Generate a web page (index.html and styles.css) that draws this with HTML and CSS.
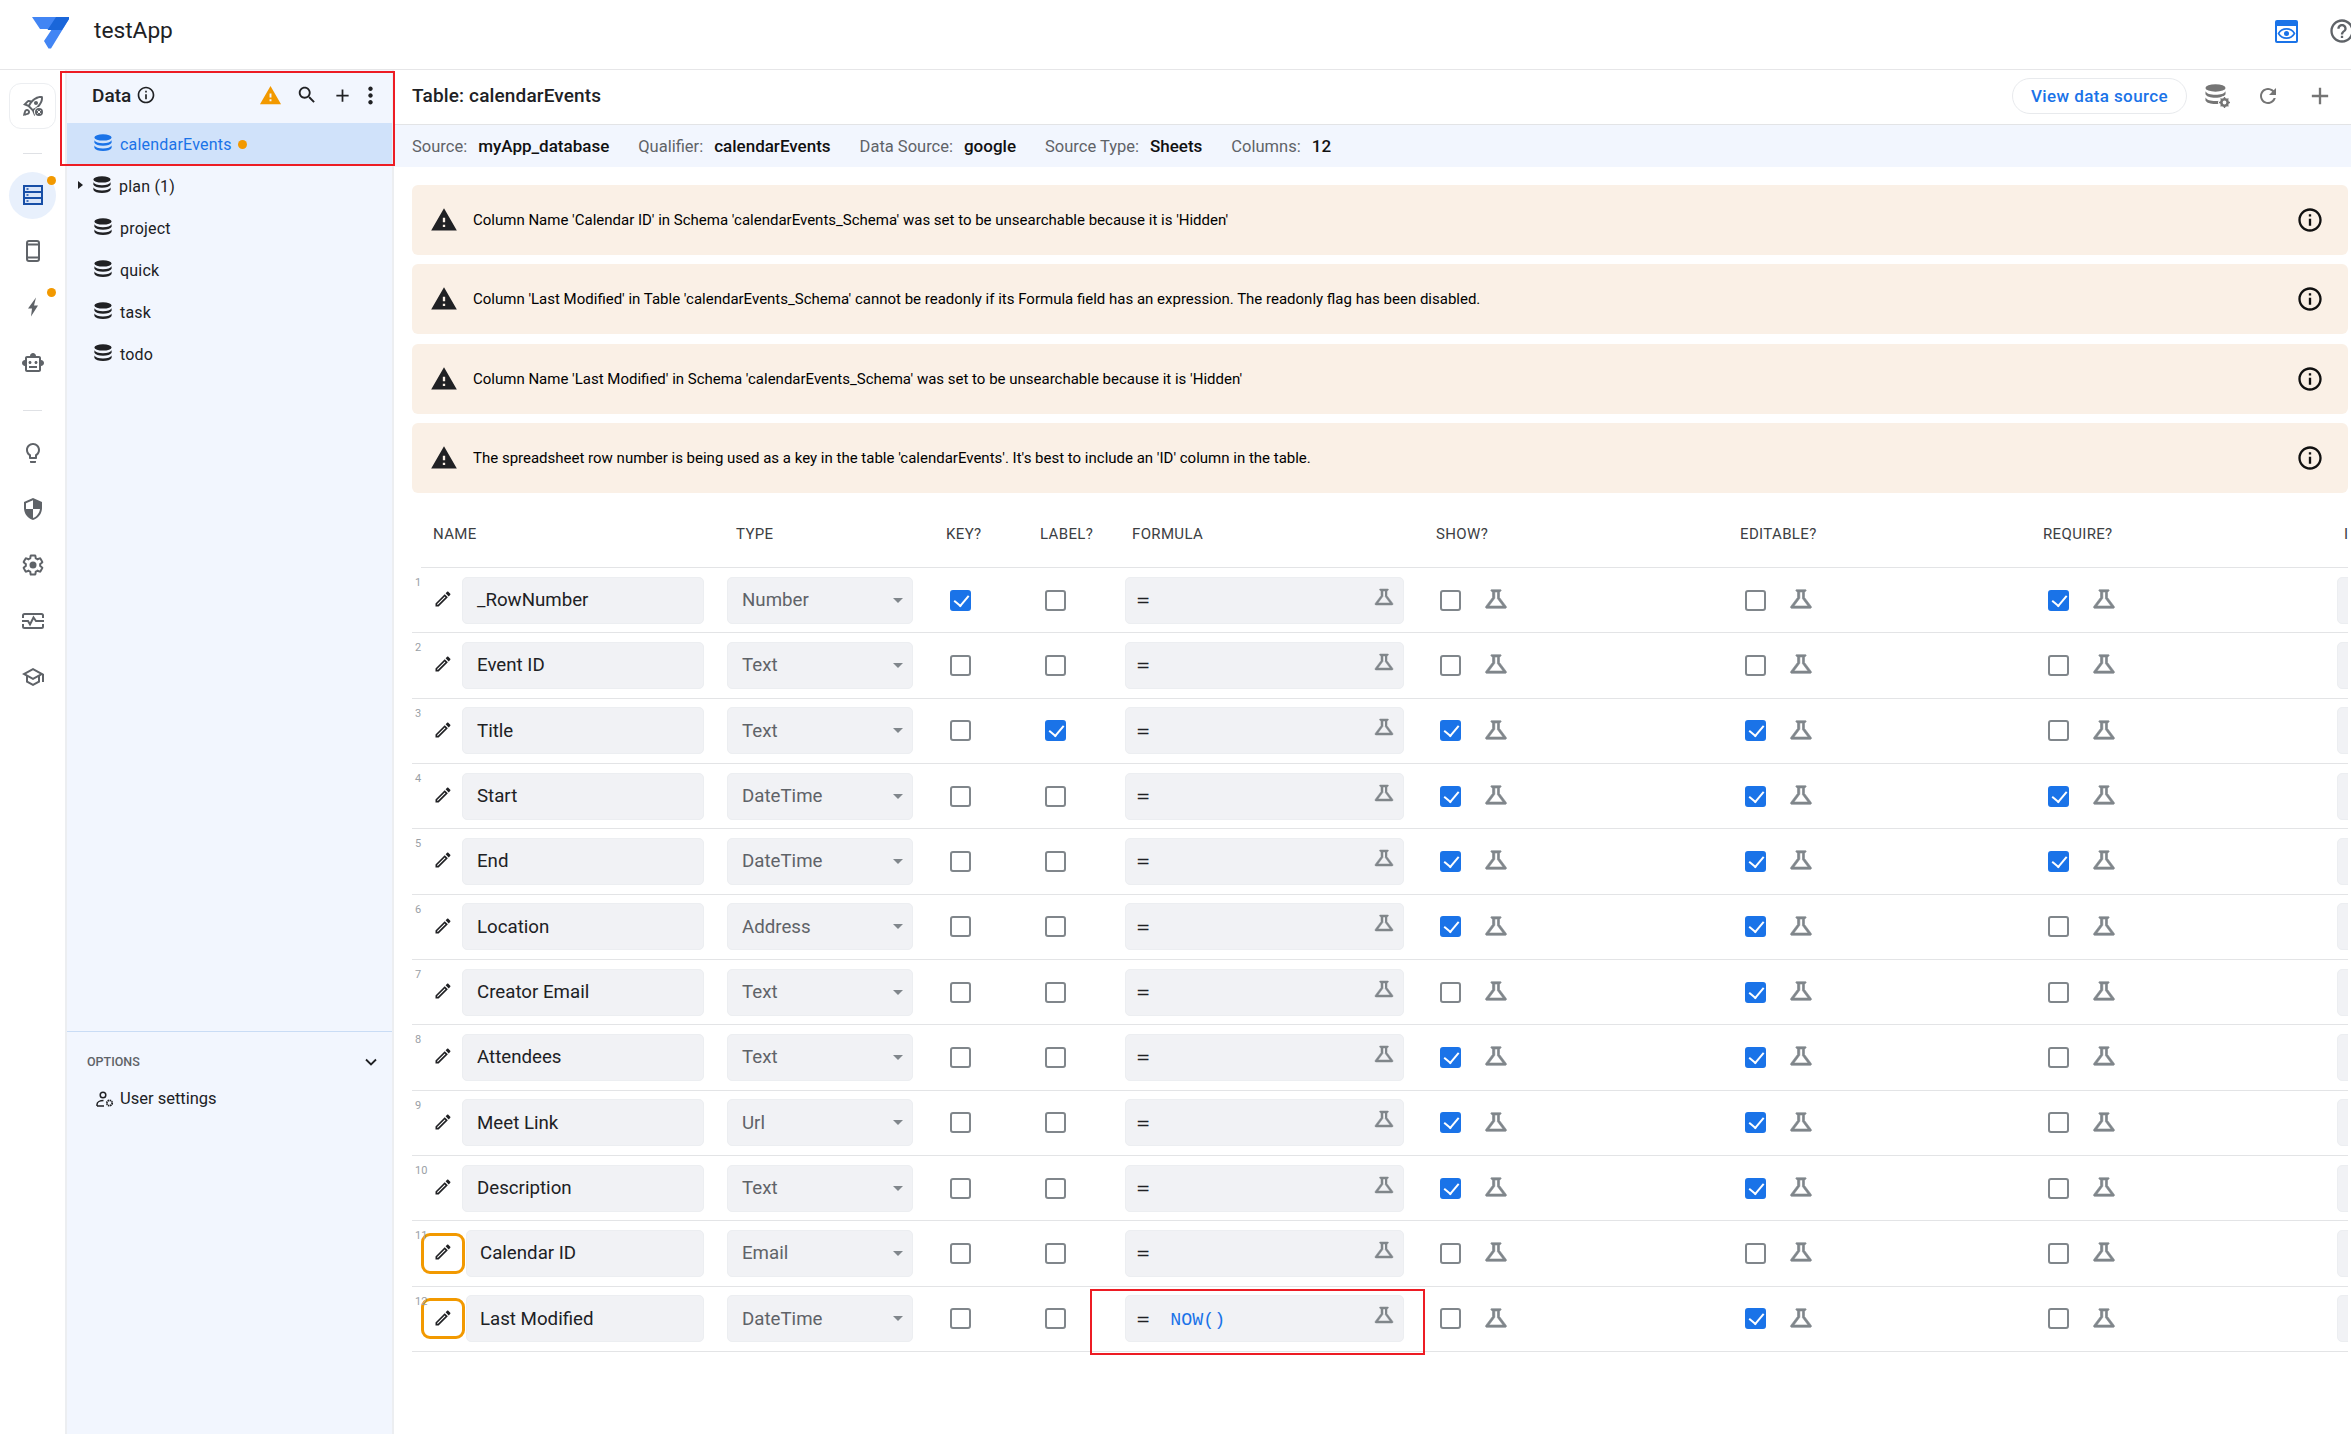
FILE: index.html
```html
<!DOCTYPE html>
<html lang="en">
<head>
    <meta charset="UTF-8">
    <meta name="viewport" content="width=device-width, initial-scale=1.0">
    <title>testApp</title>
    <link rel="stylesheet" href="styles.css">
</head>
<body>
  <svg class="defs">
    <symbol id="i-db" viewBox="0 0 18 18"><ellipse cx="9" cy="3.4" rx="8.6" ry="3.2"/><path d="M.4 6.2c1 2 4.200 3 8.600 3s7.600-1 8.600-3v2.600c-1 2-4.200 3-8.600 3s-7.600-1-8.600-3z"/><path d="M.4 11.500c1 2 4.200 3 8.600 3s7.600-1 8.600-3v2.600c-1 2-4.200 3-8.600 3s-7.600-1-8.600-3z"/></symbol>
    <symbol id="i-edit" viewBox="0 0 24 24"><path d="M14.060 9.020l.92.92L5.920 19H5v-.92l9.060-9.060M17.660 3c-.25 0-.51.1-.7.29l-1.830 1.830 3.750 3.750 1.830-1.830c.39-.39.39-1.020 0-1.410l-2.340-2.340c-.2-.2-.45-.29-.71-.29zm-3.600 3.190L3 17.250V21h3.750L17.810 9.940l-3.750-3.750z"/></symbol>
    <symbol id="i-flask" viewBox="0 0 24 24"><path d="M13 11.330L18 18H6l5-6.670V6h2m2.960-2H8.040c-.42 0-.65.48-.39.81L9 6.500v4.170L3.200 18.400c-.49.66-.02 1.600.8 1.600h16c.82 0 1.290-.94.8-1.600L15 10.670V6.500l1.350-1.690c.26-.33.03-.81-.39-.81z"/></symbol>
    <symbol id="i-warn" viewBox="0 0 24 24"><path fill-rule="evenodd" d="M1 21h22L12 2 1 21zm12-3h-2v-2h2v2zm0-4h-2v-4h2v4z"/></symbol>
    <symbol id="i-info" viewBox="0 0 24 24"><path d="M11 7h2v2h-2zm0 4h2v6h-2zm1-9C6.480 2 2 6.480 2 12s4.480 10 10 10 10-4.480 10-10S17.520 2 12 2zm0 18c-4.410 0-8-3.590-8-8s3.590-8 8-8 8 3.590 8 8-3.590 8-8 8z"/></symbol>
    <symbol id="i-plus" viewBox="0 0 24 24"><path d="M19 13h-6v6h-2v-6H5v-2h6V5h2v6h6v2z"/></symbol>
  </svg>

  <header class="topbar">
    <svg class="logo" viewBox="32 15 37 33">
      <polygon fill="#4285f4" points="32,16 69,16 69,18 51,47.500 48.500,47.500 44,40 52,28 40,28"/>
      <polygon fill="#1a66d9" points="56,16 69,16 69,18 62,29 47.500,29"/>
    </svg>
    <span class="app-name">testApp</span>
    <svg class="preview-icon" viewBox="0 0 23 23">
      <rect width="23" height="23" rx="2" fill="#1a73e8"/>
      <rect x="2" y="6" width="19" height="15" fill="#fff"/>
      <path d="M3.500 13.500c2-3.400 4.800-4.600 8-4.600s6 1.200 8 4.600c-2 3.400-4.800 4.600-8 4.600s-6-1.200-8-4.600z" fill="none" stroke="#1a73e8" stroke-width="1.600"/>
      <circle cx="11.500" cy="13.500" r="2.500" fill="#1a73e8"/>
    </svg>
    <svg class="help-icon" viewBox="0 0 24 24"><path d="M11 18h2v-2h-2v2zm1-16C6.480 2 2 6.480 2 12s4.480 10 10 10 10-4.480 10-10S17.520 2 12 2zm0 18c-4.410 0-8-3.590-8-8s3.590-8 8-8 8 3.590 8 8-3.590 8-8 8zm0-14c-2.210 0-4 1.790-4 4h2c0-1.100.9-2 2-2s2 .9 2 2c0 2-3 1.750-3 5h2c0-2.250 3-2.500 3-5 0-2.210-1.790-4-4-4z"/></svg>
  </header>

  <div class="app">
    <nav class="rail">
      <div class="rail-tile">
        <svg viewBox="0 0 24 24"><path d="M6 15c-.83 0-1.580.34-2.120.88C2.700 17.060 2 22 2 22s4.940-.7 6.120-1.880C8.660 19.580 9 18.830 9 18c0-1.660-1.340-3-3-3zm.71 3.710c-.28.28-2.170.76-2.170.76s.47-1.880.76-2.170c.17-.19.42-.3.7-.3.55 0 1 .45 1 1 0 .28-.11.53-.29.71zm10.710-5.060c6.360-6.360 4.240-11.310 4.240-11.310s-4.950-2.120-11.310 4.240l-2.490-.5c-.66-.13-1.340.08-1.820.55L2 10.690l5 2.140L11.170 17l2.140 5 4.050-4.050c.47-.47.68-1.150.55-1.810l-.49-2.490zM7.410 10.830l-1.910-.82 1.970-1.970 1.440.29c-.57.83-1.080 1.700-1.500 2.500zm6.580 7.670l-.82-1.910c.8-.42 1.670-.93 2.490-1.500l.29 1.440-1.960 1.970zm2-6.270c-1.320 1.320-3.380 2.400-4.040 2.730l-2.910-2.910c.32-.65 1.400-2.710 2.730-4.040 4.680-4.680 8.230-3.990 8.230-3.990s.69 3.530-3.990 8.210h-.02zM15 11c1.100 0 2-.9 2-2s-.9-2-2-2-2 .9-2 2 .9 2 2 2z"/><circle cx="18" cy="18" r="5" fill="#fff"/><circle cx="18" cy="18" r="4"/><path d="M16.300 16.300l3.400 3.400m0-3.400l-3.400 3.400" stroke="#fff" stroke-width="1"/></svg>
      </div>
      <div class="rail-sep first"></div>
      <div class="rail-item active">
        <span class="rail-bg"></span>
        <svg class="table-icon" viewBox="0 0 20 20"><rect x="1" y="1" width="18" height="18" fill="#dbe6f8" stroke="#174ea6" stroke-width="2"/><path d="M1 7h18M1 13h18" stroke="#174ea6" stroke-width="2"/><path d="M3.500 4h2M3.500 10h2M3.500 16h2" stroke="#174ea6" stroke-width="1.500"/></svg>
        <span class="rail-dot"></span>
      </div>
      <div class="rail-item">
        <svg class="stroke-icon" viewBox="0 0 24 24"><rect x="6" y="2" width="12" height="20" rx="2"/><path d="M6 18.500h12M6 5.500h12"/></svg>
      </div>
      <div class="rail-item">
        <svg viewBox="0 0 24 24"><polygon points="15,2.500 7,13.500 11,13.500 10,21.500 17,10.500 13,10.500"/></svg>
        <span class="rail-dot"></span>
      </div>
      <div class="rail-item">
        <svg viewBox="0 0 24 24"><path d="M20 9V7c0-1.100-.9-2-2-2h-3c0-1.660-1.340-3-3-3S9 3.340 9 5H6c-1.100 0-2 .9-2 2v2c-1.660 0-3 1.340-3 3s1.340 3 3 3v4c0 1.100.9 2 2 2h12c1.100 0 2-.9 2-2v-4c1.660 0 3-1.340 3-3s-1.340-3-3-3zm-2 10H6V7h12v12zm-9-6c-.83 0-1.500-.67-1.500-1.500S8.170 10 9 10s1.500.67 1.500 1.500S9.830 13 9 13zm7.500-1.500c0 .83-.67 1.500-1.500 1.500s-1.500-.67-1.500-1.500.67-1.500 1.500-1.500 1.500.67 1.500 1.500zM8 15h8v2H8v-2z"/></svg>
      </div>
      <div class="rail-sep second"></div>
      <div class="rail-item">
        <svg viewBox="0 0 24 24"><path d="M9 21c0 .55.45 1 1 1h4c.55 0 1-.45 1-1v-1H9v1zm3-19C8.140 2 5 5.140 5 9c0 2.380 1.190 4.470 3 5.740V17c0 .55.45 1 1 1h6c.55 0 1-.45 1-1v-2.260c1.810-1.270 3-3.360 3-5.740 0-3.860-3.140-7-7-7zm2.850 11.100l-.85.6V16h-4v-2.300l-.85-.6C7.800 12.160 7 10.630 7 9c0-2.760 2.240-5 5-5s5 2.240 5 5c0 1.630-.8 3.160-2.150 4.100z"/></svg>
      </div>
      <div class="rail-item">
        <svg viewBox="0 0 24 24"><path d="M12 1L3 5v6c0 5.550 3.840 10.740 9 12 5.160-1.260 9-6.450 9-12V5l-9-4zm0 10.990h7c-.53 4.120-3.280 7.790-7 8.940V12H5V6.300l7-3.110v8.800z"/></svg>
      </div>
      <div class="rail-item">
        <svg viewBox="0 0 24 24"><path d="M19.140 12.940c.04-.3.06-.61.06-.94 0-.32-.02-.64-.07-.94l2.030-1.580c.18-.14.23-.41.12-.61l-1.920-3.320c-.12-.22-.37-.29-.59-.22l-2.390.96c-.5-.38-1.030-.7-1.620-.94l-.36-2.540c-.04-.24-.24-.41-.48-.41h-3.840c-.24 0-.43.17-.47.41l-.36 2.540c-.59.24-1.130.57-1.620.94l-2.390-.96c-.22-.08-.47 0-.59.22L2.740 8.870c-.12.21-.08.47.12.61l2.030 1.580c-.05.3-.09.63-.09.94s.02.64.07.94l-2.030 1.580c-.18.14-.23.41-.12.61l1.920 3.320c.12.22.37.29.59.22l2.390-.96c.5.38 1.030.7 1.620.94l.36 2.540c.05.24.24.41.48.41h3.840c.24 0 .44-.17.47-.41l.36-2.540c.59-.24 1.130-.56 1.620-.94l2.390.96c.22.08.47 0 .59-.22l1.920-3.320c.12-.22.07-.47-.12-.61l-2.010-1.580z" fill="none" stroke="#5f6368" stroke-width="2"/><circle cx="12" cy="12" r="3.500"/></svg>
      </div>
      <div class="rail-item">
        <svg class="stroke-icon" viewBox="0 0 24 24"><path d="M2 9V6.500A1.500 1.500 0 0 1 3.500 5h17A1.500 1.500 0 0 1 22 6.500V9M2 15v2.500A1.500 1.500 0 0 0 3.500 19h17a1.500 1.500 0 0 0 1.500-1.500V15"/><path d="M1 12h6l2 3.500 3.500-7 2.500 3.500h8"/></svg>
      </div>
      <div class="rail-item">
        <svg viewBox="0 0 24 24"><path d="M12 3L1 9l4 2.180v6L12 21l7-3.820v-6l2-1.090V17h2V9L12 3zm6.820 6L12 12.720 5.180 9 12 5.280 18.820 9zM17 15.990l-5 2.730-5-2.730v-3.720L12 15l5-2.730v3.720z"/></svg>
      </div>
    </nav>

    <aside class="side">
      <div class="side-head">
        <span class="side-title">Data</span>
        <svg class="side-info"><use href="#i-info"/></svg>
        <svg class="side-warn"><use href="#i-warn"/></svg>
        <svg class="side-search" viewBox="0 0 24 24"><path d="M15.500 14h-.79l-.28-.27C15.410 12.590 16 11.110 16 9.500 16 5.910 13.090 3 9.500 3S3 5.910 3 9.500 5.910 16 9.500 16c1.610 0 3.090-.59 4.230-1.570l.27.28v.79l5 4.990L20.490 19l-4.990-5zm-6 0C7.010 14 5 11.990 5 9.500S7.010 5 9.500 5 14 7.010 14 9.500 11.990 14 9.500 14z"/></svg>
        <svg class="side-plus"><use href="#i-plus"/></svg>
        <svg class="side-more" viewBox="0 0 24 24"><path d="M12 8c1.100 0 2-.9 2-2s-.9-2-2-2-2 .9-2 2 .9 2 2 2zm0 2c-1.100 0-2 .9-2 2s.9 2 2 2 2-.9 2-2-.9-2-2-2zm0 6c-1.100 0-2 .9-2 2s.9 2 2 2 2-.9 2-2-.9-2-2-2z"/></svg>
      </div>
      <ul class="side-list">
        <li class="side-row selected"><svg class="db"><use href="#i-db"/></svg>calendarEvents<span class="side-dot"></span></li>
        <li class="side-row has-caret"><span class="tree-caret"></span><svg class="db"><use href="#i-db"/></svg>plan (1)</li>
        <li class="side-row"><svg class="db"><use href="#i-db"/></svg>project</li>
        <li class="side-row"><svg class="db"><use href="#i-db"/></svg>quick</li>
        <li class="side-row"><svg class="db"><use href="#i-db"/></svg>task</li>
        <li class="side-row"><svg class="db"><use href="#i-db"/></svg>todo</li>
      </ul>
      <div class="side-options">
        <div class="options-head">
          <span>OPTIONS</span>
          <svg class="chevron" viewBox="0 0 12 8"><path d="M1 1.500l5 5 5-5" fill="none" stroke="#202124" stroke-width="1.800"/></svg>
        </div>
        <div class="options-row">
          <svg class="user-icon" viewBox="0 0 18 16"><circle cx="7" cy="4" r="2.800" fill="none" stroke="#202124" stroke-width="1.500"/><path d="M1 15v-1.500C1 11 4 9.500 7.500 9.500" fill="none" stroke="#202124" stroke-width="1.500"/><path d="M1 15h7" stroke="#202124" stroke-width="1.500"/><circle cx="13.500" cy="12" r="2.700" fill="none" stroke="#202124" stroke-width="1.800" stroke-dasharray="1.500 .6"/></svg>
          <span>User settings</span>
        </div>
      </div>
      <div class="red-box side-mark"></div>
    </aside>

    <main class="main">
      <div class="title-bar">
        <h1>Table: calendarEvents</h1>
        <a class="pill">View data source</a>
        <svg class="db-gear" viewBox="0 0 26 26"><use href="#i-db" width="21" height="21" y="1" fill="#757575"/><circle cx="19.500" cy="19.500" r="6.500" fill="#fff"/><circle cx="19.500" cy="19.500" r="3.200" fill="none" stroke="#757575" stroke-width="2.600"/><path d="M19.500 14v11M14 19.500h11M15.600 15.600l7.800 7.800M23.400 15.600l-7.800 7.800" stroke="#757575" stroke-width="1.400" stroke-dasharray="1.800 7.400"/></svg>
        <svg class="refresh" viewBox="0 0 24 24"><path d="M17.650 6.350C16.200 4.900 14.210 4 12 4c-4.420 0-7.990 3.580-7.990 8s3.570 8 7.990 8c3.730 0 6.840-2.550 7.730-6h-2.080c-.82 2.330-3.040 4-5.650 4-3.310 0-6-2.690-6-6s2.690-6 6-6c1.660 0 3.140.69 4.220 1.780L13 11h7V4l-2.350 2.350z"/></svg>
        <svg class="title-plus"><use href="#i-plus"/></svg>
      </div>
      <div class="meta-bar">
        <span><i>Source:</i><b>myApp_database</b></span>
        <span><i>Qualifier:</i><b>calendarEvents</b></span>
        <span><i>Data Source:</i><b>google</b></span>
        <span><i>Source Type:</i><b>Sheets</b></span>
        <span><i>Columns:</i><b>12</b></span>
      </div>

      <section class="alerts">
        <div class="alert"><svg class="alert-warn"><use href="#i-warn"/></svg><p>Column Name 'Calendar ID' in Schema 'calendarEvents_Schema' was set to be unsearchable because it is 'Hidden'</p><svg class="alert-info"><use href="#i-info"/></svg></div>
        <div class="alert"><svg class="alert-warn"><use href="#i-warn"/></svg><p>Column 'Last Modified' in Table 'calendarEvents_Schema' cannot be readonly if its Formula field has an expression. The readonly flag has been disabled.</p><svg class="alert-info"><use href="#i-info"/></svg></div>
        <div class="alert"><svg class="alert-warn"><use href="#i-warn"/></svg><p>Column Name 'Last Modified' in Schema 'calendarEvents_Schema' was set to be unsearchable because it is 'Hidden'</p><svg class="alert-info"><use href="#i-info"/></svg></div>
        <div class="alert"><svg class="alert-warn"><use href="#i-warn"/></svg><p>The spreadsheet row number is being used as a key in the table 'calendarEvents'. It's best to include an 'ID' column in the table.</p><svg class="alert-info"><use href="#i-info"/></svg></div>
      </section>

      <section class="columns">
        <div class="thead">
          <span class="th-name">NAME</span>
          <span class="th-type">TYPE</span>
          <span class="th-key">KEY?</span>
          <span>LABEL?</span>
          <span class="th-formula">FORMULA</span>
          <span class="th-show">SHOW?</span>
          <span>EDITABLE?</span>
          <span>REQUIRE?</span>
          <span class="th-last">I</span>
        </div>

        <div class="row">
          <div class="edit"><span class="num">1</span><span class="edit-btn"><svg class="pencil"><use href="#i-edit"/></svg></span></div>
          <div class="name-box">_RowNumber</div>
          <div class="type-box">Number<span class="caret"></span></div>
          <div class="flag"><span class="check on"></span></div>
          <div class="flag"><span class="check"></span></div>
          <div class="formula"><span class="eq">=</span><svg class="flask-in"><use href="#i-flask"/></svg></div>
          <div class="flag"><span class="check"></span><svg class="flask"><use href="#i-flask"/></svg></div>
          <div class="flag"><span class="check"></span><svg class="flask"><use href="#i-flask"/></svg></div>
          <div class="flag"><span class="check on"></span><svg class="flask"><use href="#i-flask"/></svg></div>
          <div class="last-box"></div>
        </div>
        <div class="row">
          <div class="edit"><span class="num">2</span><span class="edit-btn"><svg class="pencil"><use href="#i-edit"/></svg></span></div>
          <div class="name-box">Event ID</div>
          <div class="type-box">Text<span class="caret"></span></div>
          <div class="flag"><span class="check"></span></div>
          <div class="flag"><span class="check"></span></div>
          <div class="formula"><span class="eq">=</span><svg class="flask-in"><use href="#i-flask"/></svg></div>
          <div class="flag"><span class="check"></span><svg class="flask"><use href="#i-flask"/></svg></div>
          <div class="flag"><span class="check"></span><svg class="flask"><use href="#i-flask"/></svg></div>
          <div class="flag"><span class="check"></span><svg class="flask"><use href="#i-flask"/></svg></div>
          <div class="last-box"></div>
        </div>
        <div class="row">
          <div class="edit"><span class="num">3</span><span class="edit-btn"><svg class="pencil"><use href="#i-edit"/></svg></span></div>
          <div class="name-box">Title</div>
          <div class="type-box">Text<span class="caret"></span></div>
          <div class="flag"><span class="check"></span></div>
          <div class="flag"><span class="check on"></span></div>
          <div class="formula"><span class="eq">=</span><svg class="flask-in"><use href="#i-flask"/></svg></div>
          <div class="flag"><span class="check on"></span><svg class="flask"><use href="#i-flask"/></svg></div>
          <div class="flag"><span class="check on"></span><svg class="flask"><use href="#i-flask"/></svg></div>
          <div class="flag"><span class="check"></span><svg class="flask"><use href="#i-flask"/></svg></div>
          <div class="last-box"></div>
        </div>
        <div class="row">
          <div class="edit"><span class="num">4</span><span class="edit-btn"><svg class="pencil"><use href="#i-edit"/></svg></span></div>
          <div class="name-box">Start</div>
          <div class="type-box">DateTime<span class="caret"></span></div>
          <div class="flag"><span class="check"></span></div>
          <div class="flag"><span class="check"></span></div>
          <div class="formula"><span class="eq">=</span><svg class="flask-in"><use href="#i-flask"/></svg></div>
          <div class="flag"><span class="check on"></span><svg class="flask"><use href="#i-flask"/></svg></div>
          <div class="flag"><span class="check on"></span><svg class="flask"><use href="#i-flask"/></svg></div>
          <div class="flag"><span class="check on"></span><svg class="flask"><use href="#i-flask"/></svg></div>
          <div class="last-box"></div>
        </div>
        <div class="row">
          <div class="edit"><span class="num">5</span><span class="edit-btn"><svg class="pencil"><use href="#i-edit"/></svg></span></div>
          <div class="name-box">End</div>
          <div class="type-box">DateTime<span class="caret"></span></div>
          <div class="flag"><span class="check"></span></div>
          <div class="flag"><span class="check"></span></div>
          <div class="formula"><span class="eq">=</span><svg class="flask-in"><use href="#i-flask"/></svg></div>
          <div class="flag"><span class="check on"></span><svg class="flask"><use href="#i-flask"/></svg></div>
          <div class="flag"><span class="check on"></span><svg class="flask"><use href="#i-flask"/></svg></div>
          <div class="flag"><span class="check on"></span><svg class="flask"><use href="#i-flask"/></svg></div>
          <div class="last-box"></div>
        </div>
        <div class="row">
          <div class="edit"><span class="num">6</span><span class="edit-btn"><svg class="pencil"><use href="#i-edit"/></svg></span></div>
          <div class="name-box">Location</div>
          <div class="type-box">Address<span class="caret"></span></div>
          <div class="flag"><span class="check"></span></div>
          <div class="flag"><span class="check"></span></div>
          <div class="formula"><span class="eq">=</span><svg class="flask-in"><use href="#i-flask"/></svg></div>
          <div class="flag"><span class="check on"></span><svg class="flask"><use href="#i-flask"/></svg></div>
          <div class="flag"><span class="check on"></span><svg class="flask"><use href="#i-flask"/></svg></div>
          <div class="flag"><span class="check"></span><svg class="flask"><use href="#i-flask"/></svg></div>
          <div class="last-box"></div>
        </div>
        <div class="row">
          <div class="edit"><span class="num">7</span><span class="edit-btn"><svg class="pencil"><use href="#i-edit"/></svg></span></div>
          <div class="name-box">Creator Email</div>
          <div class="type-box">Text<span class="caret"></span></div>
          <div class="flag"><span class="check"></span></div>
          <div class="flag"><span class="check"></span></div>
          <div class="formula"><span class="eq">=</span><svg class="flask-in"><use href="#i-flask"/></svg></div>
          <div class="flag"><span class="check"></span><svg class="flask"><use href="#i-flask"/></svg></div>
          <div class="flag"><span class="check on"></span><svg class="flask"><use href="#i-flask"/></svg></div>
          <div class="flag"><span class="check"></span><svg class="flask"><use href="#i-flask"/></svg></div>
          <div class="last-box"></div>
        </div>
        <div class="row">
          <div class="edit"><span class="num">8</span><span class="edit-btn"><svg class="pencil"><use href="#i-edit"/></svg></span></div>
          <div class="name-box">Attendees</div>
          <div class="type-box">Text<span class="caret"></span></div>
          <div class="flag"><span class="check"></span></div>
          <div class="flag"><span class="check"></span></div>
          <div class="formula"><span class="eq">=</span><svg class="flask-in"><use href="#i-flask"/></svg></div>
          <div class="flag"><span class="check on"></span><svg class="flask"><use href="#i-flask"/></svg></div>
          <div class="flag"><span class="check on"></span><svg class="flask"><use href="#i-flask"/></svg></div>
          <div class="flag"><span class="check"></span><svg class="flask"><use href="#i-flask"/></svg></div>
          <div class="last-box"></div>
        </div>
        <div class="row">
          <div class="edit"><span class="num">9</span><span class="edit-btn"><svg class="pencil"><use href="#i-edit"/></svg></span></div>
          <div class="name-box">Meet Link</div>
          <div class="type-box">Url<span class="caret"></span></div>
          <div class="flag"><span class="check"></span></div>
          <div class="flag"><span class="check"></span></div>
          <div class="formula"><span class="eq">=</span><svg class="flask-in"><use href="#i-flask"/></svg></div>
          <div class="flag"><span class="check on"></span><svg class="flask"><use href="#i-flask"/></svg></div>
          <div class="flag"><span class="check on"></span><svg class="flask"><use href="#i-flask"/></svg></div>
          <div class="flag"><span class="check"></span><svg class="flask"><use href="#i-flask"/></svg></div>
          <div class="last-box"></div>
        </div>
        <div class="row">
          <div class="edit"><span class="num">10</span><span class="edit-btn"><svg class="pencil"><use href="#i-edit"/></svg></span></div>
          <div class="name-box">Description</div>
          <div class="type-box">Text<span class="caret"></span></div>
          <div class="flag"><span class="check"></span></div>
          <div class="flag"><span class="check"></span></div>
          <div class="formula"><span class="eq">=</span><svg class="flask-in"><use href="#i-flask"/></svg></div>
          <div class="flag"><span class="check on"></span><svg class="flask"><use href="#i-flask"/></svg></div>
          <div class="flag"><span class="check on"></span><svg class="flask"><use href="#i-flask"/></svg></div>
          <div class="flag"><span class="check"></span><svg class="flask"><use href="#i-flask"/></svg></div>
          <div class="last-box"></div>
        </div>
        <div class="row flagged">
          <div class="edit"><span class="num">11</span><span class="edit-btn"><svg class="pencil"><use href="#i-edit"/></svg></span></div>
          <div class="name-box">Calendar ID</div>
          <div class="type-box">Email<span class="caret"></span></div>
          <div class="flag"><span class="check"></span></div>
          <div class="flag"><span class="check"></span></div>
          <div class="formula"><span class="eq">=</span><svg class="flask-in"><use href="#i-flask"/></svg></div>
          <div class="flag"><span class="check"></span><svg class="flask"><use href="#i-flask"/></svg></div>
          <div class="flag"><span class="check"></span><svg class="flask"><use href="#i-flask"/></svg></div>
          <div class="flag"><span class="check"></span><svg class="flask"><use href="#i-flask"/></svg></div>
          <div class="last-box"></div>
        </div>
        <div class="row flagged">
          <div class="edit"><span class="num">12</span><span class="edit-btn"><svg class="pencil"><use href="#i-edit"/></svg></span></div>
          <div class="name-box">Last Modified</div>
          <div class="type-box">DateTime<span class="caret"></span></div>
          <div class="flag"><span class="check"></span></div>
          <div class="flag"><span class="check"></span></div>
          <div class="formula marked"><span class="eq">=</span><span class="expr">NOW()</span><svg class="flask-in"><use href="#i-flask"/></svg><div class="red-box formula-mark"></div></div>
          <div class="flag"><span class="check"></span><svg class="flask"><use href="#i-flask"/></svg></div>
          <div class="flag"><span class="check on"></span><svg class="flask"><use href="#i-flask"/></svg></div>
          <div class="flag"><span class="check"></span><svg class="flask"><use href="#i-flask"/></svg></div>
          <div class="last-box"></div>
        </div>
      </section>
    </main>
  </div>
</body>
</html>
```

FILE: styles.css
```css
*{
    margin: 0;
    padding: 0;
    box-sizing: border-box;
    font-family: Roboto, "Liberation Sans", sans-serif;
}
html, body{
    width: 100%;
    height: 100%;
    overflow: hidden;
    background-color: white;
    color: #202124;
}
.defs{
    display: none;
}

/* top bar */
.topbar{
    height: 70px;
    display: flex;
    align-items: center;
    border-bottom: 1.5px solid #e6e6e8;
    padding-left: 32px;
}
.logo{
    width: 37px;
    height: 33px;
    margin-top: -4px;
}
.app-name{
    margin-left: 25px;
    font-size: 22.7px;
    margin-top: -8px;
}
.preview-icon{
    width: 23px;
    height: 23px;
    margin-left: auto;
    margin-top: -6px;
}
.help-icon{
    width: 28px;
    height: 28px;
    fill: #5f6368;
    margin-left: 30px;
    margin-right: -5px;
    margin-top: -8px;
    flex-shrink: 0;
}

.app{
    display: flex;
    height: calc(100% - 70px);
}

/* icon rail */
.rail{
    width: 65px;
    flex-shrink: 0;
    display: flex;
    flex-direction: column;
    align-items: center;
    padding-top: 13px;
}
.rail svg{
    width: 24px;
    height: 24px;
    fill: #5f6368;
    position: relative;
}
.rail-tile{
    width: 47px;
    height: 46px;
    border: 1.5px solid #eceef1;
    border-radius: 12px;
    display: flex;
    align-items: center;
    justify-content: center;
}
.rail-sep{
    width: 19px;
    height: 1px;
    background-color: #dfe1e5;
}
.rail-sep.first{
    margin: 24px 0 13px;
}
.rail-sep.second{
    margin: 19px 0 14px;
}
.rail-item{
    width: 47px;
    height: 56px;
    display: flex;
    align-items: center;
    justify-content: center;
    position: relative;
}
.rail-bg{
    position: absolute;
    width: 47px;
    height: 47px;
    border-radius: 50%;
    background-color: #e8f0fc;
}
.rail-dot{
    position: absolute;
    top: 9px;
    right: 0;
    width: 9px;
    height: 9px;
    border-radius: 50%;
    background-color: #f29900;
}
.rail .table-icon{
    width: 20px;
    height: 20px;
}
.rail .stroke-icon{
    fill: none;
    stroke: #5f6368;
    stroke-width: 2;
}

/* data panel */
.side{
    width: 329px;
    flex-shrink: 0;
    display: flex;
    flex-direction: column;
    position: relative;
    background-color: #f2f6fe;
    border-left: 2px solid #eceef1;
    border-right: 2px solid #eceef1;
}
.side-head{
    height: 53px;
    display: flex;
    align-items: center;
    padding: 0 8px 3px 25px;
}
.side-title{
    font-size: 19px;
    font-weight: 500;
}
.side-info{
    width: 20px;
    height: 20px;
    margin-left: 5px;
    fill: #202124;
}
.side-warn{
    width: 23px;
    height: 23px;
    margin-left: auto;
    fill: #f29900;
}
.side-search{
    width: 22px;
    height: 22px;
    margin-left: 14px;
    fill: #202124;
}
.side-plus{
    width: 21px;
    height: 21px;
    margin-left: 14px;
    fill: #202124;
}
.side-more{
    width: 27px;
    height: 27px;
    margin-left: 4px;
    fill: #202124;
}
.side-list{
    list-style: none;
}
.side-row{
    height: 42px;
    display: flex;
    align-items: center;
    padding-left: 27px;
    font-size: 16px;
    letter-spacing: .2px;
}
.db{
    width: 18px;
    height: 18px;
    margin-right: 8px;
    margin-top: -2px;
    fill: #202124;
}
.side-row.selected{
    background-color: #d0e2fa;
    color: #1a73e8;
}
.side-row.selected .db{
    fill: #1a73e8;
}
.side-row.has-caret{
    padding-left: 11px;
}
.tree-caret{
    width: 0;
    height: 0;
    border-left: 5px solid #202124;
    border-top: 4.5px solid transparent;
    border-bottom: 4.5px solid transparent;
    margin-right: 10px;
    margin-top: -2px;
}
.side-dot{
    width: 9px;
    height: 9px;
    border-radius: 50%;
    background-color: #f29900;
    margin-left: 6px;
}
.side-options{
    margin-top: auto;
    height: 403px;
    border-top: 1px solid #c9dcf5;
}
.options-head{
    display: flex;
    align-items: center;
    justify-content: space-between;
    padding: 22px 15px 0 20px;
    font-size: 12.5px;
    font-weight: 500;
    color: #5f6368;
}
.chevron{
    width: 12px;
    height: 8px;
}
.options-row{
    display: flex;
    align-items: center;
    padding: 20px 0 0 29px;
    font-size: 16.5px;
}
.user-icon{
    width: 18px;
    height: 16px;
    margin-right: 6px;
}
.red-box{
    position: absolute;
    border: 2px solid #ed1c24;
    pointer-events: none;
}
.side-mark{
    left: -7px;
    top: 1px;
    width: 335px;
    height: 95px;
}

/* main */
.main{
    flex: 1;
    min-width: 0;
}
.title-bar{
    height: 55px;
    display: flex;
    align-items: center;
    padding: 0 17px 3px 18px;
    border-bottom: 1.5px solid #e3e4e6;
}
.title-bar h1{
    font-size: 19px;
    font-weight: 500;
    letter-spacing: .15px;
    margin-right: auto;
}
.pill{
    width: 175px;
    height: 36px;
    display: flex;
    align-items: center;
    justify-content: center;
    border: 1.5px solid #e8eaed;
    border-radius: 18px;
    color: #1a73e8;
    font-size: 17px;
    font-weight: 500;
    letter-spacing: .4px;
}
.db-gear{
    width: 26px;
    height: 26px;
    margin-left: 18px;
}
.refresh{
    width: 24px;
    height: 24px;
    margin-left: 25px;
    fill: #757575;
}
.title-plus{
    width: 28px;
    height: 28px;
    margin-left: 26px;
    fill: #757575;
}
.meta-bar{
    height: 42px;
    display: flex;
    align-items: center;
    gap: 29px;
    padding-left: 18px;
    background-color: #f2f6fe;
    font-size: 16.5px;
}
.meta-bar i{
    font-style: normal;
    color: #5f6368;
    margin-right: 11px;
}
.meta-bar b{
    font-size: 17px;
    font-weight: 500;
    color: #111;
}

/* alerts */
.alerts{
    padding: 18px 3px 0 18px;
}
.alert{
    height: 70px;
    margin-bottom: 9.33px;
    display: flex;
    align-items: center;
    padding: 0 24px 0 19px;
    border-radius: 6px;
    background-color: #faf0e6;
}
.alert:last-child{
    margin-bottom: 0;
}
.alert p{
    font-size: 15px;
    color: #000;
    margin-left: 15px;
    margin-right: auto;
}
.alert-warn{
    width: 28px;
    height: 28px;
    fill: #202124;
    margin-left: -1px;
}
.alert-info{
    width: 28px;
    height: 28px;
    fill: #111;
}

/* columns table */
.columns{
    margin: 0 3px 0 18px;
    padding-bottom: 10px;
    overflow: hidden;
}
.thead, .row{
    display: grid;
    grid-template-columns: 50px 265px 218px 95px 85px 310px 305px 303px 294px 100px;
}
.thead{
    height: 75px;
    padding-top: 8px;
    align-items: center;
    font-size: 15px;
    letter-spacing: .35px;
    color: #3c4043;
    margin-left: 9px;
    grid-template-columns: 306px 218px 95px 84px 311px 305px 303px 294px 100px;
    border-bottom: 1.5px solid #e3e4e6;
    white-space: nowrap;
}
.th-name{
    padding-left: 12px;
}
.th-type{
    padding-left: 9px;
}
.th-key{
    padding-left: 1px;
}
.th-formula{
    padding-left: 8px;
}
.th-show{
    padding-left: 1px;
}
.th-last{
    padding-left: 7px;
}
.row{
    height: 65.33px;
    align-items: center;
    border-bottom: 1.5px solid #e3e4e6;
}
.edit{
    height: 100%;
    display: flex;
    align-items: center;
    position: relative;
}
.num{
    position: absolute;
    left: 3px;
    top: 8px;
    font-size: 11px;
    color: #9aa0a6;
    z-index: 1;
}
.edit-btn{
    display: flex;
    align-items: center;
    justify-content: center;
    flex-shrink: 0;
    width: 22px;
    height: 41px;
    margin-left: 20px;
}
.pencil{
    width: 20px;
    height: 20px;
    margin-top: -2px;
    fill: #202124;
}
.name-box, .type-box, .formula, .last-box{
    height: 47px;
    border: 1px solid #eceef1;
    border-radius: 5px;
    background-color: #f1f2f5;
    display: flex;
    align-items: center;
}
.name-box{
    width: 242px;
    padding-left: 14px;
    font-size: 18.7px;
    color: #202124;
}
.type-box{
    width: 186px;
    padding-left: 14px;
    padding-right: 9px;
    font-size: 18.7px;
    color: #5f6368;
    justify-content: space-between;
}
.caret{
    width: 0;
    height: 0;
    border-top: 5px solid #80868b;
    border-left: 5.5px solid transparent;
    border-right: 5.5px solid transparent;
}
.flagged .edit-btn{
    width: 44px;
    margin-left: 9px;
    border: 3px solid #f29900;
    border-radius: 9px;
}
.flagged .name-box{
    width: 238px;
    margin-left: 4px;
    padding-left: 13px;
}
.flag{
    display: flex;
    align-items: center;
    padding-left: 5px;
}
.check{
    width: 21px;
    height: 21px;
    border: 2.5px solid #80868b;
    border-radius: 3px;
    flex-shrink: 0;
    position: relative;
}
.check.on{
    background-color: #1a73e8;
    border-color: #1a73e8;
}
.check.on::after{
    content: "";
    position: absolute;
    left: 4.5px;
    top: 0;
    width: 7px;
    height: 12px;
    border-right: 2px solid white;
    border-bottom: 2px solid white;
    transform: rotate(40deg);
}
.flask{
    width: 28px;
    height: 28px;
    fill: #80868b;
    stroke: #80868b;
    stroke-width: .5;
    margin-left: 20.5px;
    margin-top: -2px;
}
.formula{
    width: 279px;
    padding-left: 10px;
    position: relative;
}
.eq{
    font-family: "DejaVu Sans", sans-serif;
    font-size: 17px;
    color: #202124;
}
.expr{
    font-family: "Liberation Mono", monospace;
    font-size: 18.3px;
    color: #1a73e8;
    margin-left: 20px;
    margin-top: 2px;
}
.flask-in{
    width: 24px;
    height: 24px;
    fill: #80868b;
    stroke: #80868b;
    stroke-width: .5;
    margin-left: auto;
    margin-right: 7px;
    align-self: flex-start;
    margin-top: 7px;
}
.formula-mark{
    left: -36px;
    top: -7px;
    width: 335px;
    height: 66px;
}
.last-box{
    width: 100px;
}
```
